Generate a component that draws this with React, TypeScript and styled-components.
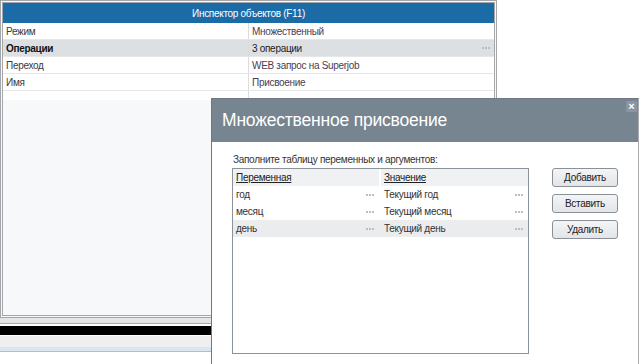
import * as React from 'react'
import styled, { createGlobalStyle } from 'styled-components'

const GlobalStyle = createGlobalStyle`
    html, body {
        margin: 0;
        padding: 0;
        background: #ffffff;
    }
    body {
        font-family: 'Liberation Sans', Arial, sans-serif;
        font-size: 10px;
        letter-spacing: -0.3px;
        color: #333333;
    }
`

const StyledPage = styled.div`
    position: relative;
    width: 640px;
    height: 364px;
    overflow: hidden;
    background: #ffffff;
`

const StyledInspector = styled.div`
    display: flex;
    flex-direction: column;
    width: 497px;
    height: 318px;
    box-sizing: border-box;
    border: 3px double #a3a7ab;
    background: #f6f8fa;
`

const StyledInspectorHeader = styled.div`
    height: 20px;
    display: flex;
    align-items: center;
    justify-content: center;
    background: #1b6ba6;
    color: #ffffff;
`

const StyledPropRow = styled.div<{ $active?: boolean }>`
    display: grid;
    grid-template-columns: 246px 1fr;
    height: 16px;
    border-bottom: 1px solid #e6e7e8;
    background: ${(p) => (p.$active ? '#dde0e3' : '#ffffff')};
`

const StyledPropName = styled.div<{ $active?: boolean }>`
    display: flex;
    align-items: center;
    padding-left: 3px;
    border-right: 1px solid #dcdcdc;
    color: ${(p) => (p.$active ? '#111111' : '#3a3a3a')};
    font-weight: ${(p) => (p.$active ? 700 : 400)};
`

const StyledPropValue = styled.div<{ $active?: boolean }>`
    display: flex;
    align-items: center;
    justify-content: space-between;
    padding: 0 4px 0 3px;
    color: ${(p) => (p.$active ? '#222222' : '#4a3d56')};
`

const StyledEmptyRow = styled.div`
    display: grid;
    grid-template-columns: 246px 1fr;
    height: 9px;
    background: #ffffff;
`

const StyledEmptyCell = styled.div`
    border-right: 1px solid #dcdcdc;
`

const StyledStrip = styled.div<{ $h: number; $bg: string; $line?: string }>`
    width: 497px;
    height: ${(p) => p.$h}px;
    background: ${(p) => p.$bg};
    border-bottom: ${(p) => (p.$line ? `1px solid ${p.$line}` : 'none')};
`

const StyledDots = styled.span`
    display: inline-flex;
    gap: 1px;
    & > i {
        display: block;
        width: 2px;
        height: 2px;
        background: #bcbec0;
    }
`

const StyledDialog = styled.div`
    position: absolute;
    left: 211px;
    top: 98px;
    width: 428px;
    height: 280px;
    box-sizing: border-box;
    border: 1px solid #6d7882;
    border-right-color: #a9adb1;
    background: #ffffff;
    display: flex;
    flex-direction: column;
`

const StyledDialogHeader = styled.div`
    height: 41px;
    display: flex;
    align-items: flex-start;
    padding: 2px 1px 0 10px;
    background: #778591;
`

const StyledDialogTitle = styled.div`
    margin-top: 9px;
    color: #ffffff;
    font-size: 17.5px;
    letter-spacing: -0.2px;
`

const StyledClose = styled.div`
    margin-left: auto;
    width: 11px;
    height: 11px;
    display: flex;
    align-items: center;
    justify-content: center;
    background: #8995a0;
    color: #ffffff;
    font-size: 11px;
    line-height: 11px;
    font-weight: 700;
    letter-spacing: 0;
`

const StyledDialogBody = styled.div`
    display: grid;
    grid-template-columns: 297px 66px;
    grid-template-rows: 14px auto;
    column-gap: 23px;
    padding: 12px 0 0 20px;
`

const StyledHint = styled.div`
    grid-column: 1 / 3;
    padding-left: 1px;
    color: #333333;
`

const StyledTable = styled.div`
    height: 186px;
    box-sizing: border-box;
    border: 1px solid #8b949d;
    background: #ffffff;
`

const StyledTableHead = styled.div`
    display: grid;
    grid-template-columns: 146px 1fr;
    column-gap: 2px;
    height: 17px;
`

const StyledHeadCell = styled.div`
    display: flex;
    align-items: center;
    padding-left: 3px;
    background: #f0f1f2;
    text-decoration: underline;
    color: #222222;
`

const StyledTableRow = styled.div<{ $active?: boolean }>`
    display: grid;
    grid-template-columns: 146px 1fr;
    column-gap: 2px;
    height: 17px;
    background: ${(p) => (p.$active ? '#ebecee' : '#ffffff')};
`

const StyledTableCell = styled.div`
    display: flex;
    align-items: center;
    justify-content: space-between;
    padding: 0 5px 0 3px;
    color: #333333;
`

const StyledButtons = styled.div`
    display: flex;
    flex-direction: column;
    gap: 7px;
`

const StyledButton = styled.button`
    height: 19px;
    padding: 0;
    box-sizing: border-box;
    border: 1px solid #8a9098;
    border-radius: 3px;
    background: linear-gradient(#f4f5f6, #e2e4e6);
    font-family: 'Liberation Sans', Arial, sans-serif;
    font-size: 10px;
    letter-spacing: -0.3px;
    color: #222222;
`

const Dots = () => (
    <StyledDots>
        <i />
        <i />
        <i />
    </StyledDots>
)

const PROPS = [
    { name: 'Режим', value: 'Множественный' },
    { name: 'Операции', value: '3 операции', active: true },
    { name: 'Переход', value: 'WEB запрос на Superjob' },
    { name: 'Имя', value: 'Присвоение' },
]

const VARS = [
    { name: 'год', value: 'Текущий год' },
    { name: 'месяц', value: 'Текущий месяц' },
    { name: 'день', value: 'Текущий день', active: true },
]

const App = () => {
    return (
        <>
            <GlobalStyle />
            <StyledPage>
                <StyledInspector>
                    <StyledInspectorHeader>Инспектор объектов (F11)</StyledInspectorHeader>
                    {PROPS.map((p) => (
                        <StyledPropRow key={p.name} $active={p.active}>
                            <StyledPropName $active={p.active}>{p.name}</StyledPropName>
                            <StyledPropValue $active={p.active}>
                                {p.value}
                                {p.active && <Dots />}
                            </StyledPropValue>
                        </StyledPropRow>
                    ))}
                    <StyledEmptyRow>
                        <StyledEmptyCell />
                    </StyledEmptyRow>
                </StyledInspector>
                <StyledStrip $h={5} $bg="#e4e5e6" $line="#a8acb0" />
                <StyledStrip $h={2} $bg="#ffffff" />
                <StyledStrip $h={9} $bg="#000000" />
                <StyledStrip $h={1} $bg="#ffffff" />
                <StyledStrip $h={11} $bg="#efefef" />
                <StyledStrip $h={4} $bg="#d9e5f1" $line="#b8bcc0" />

                <StyledDialog>
                    <StyledDialogHeader>
                        <StyledDialogTitle>Множественное присвоение</StyledDialogTitle>
                        <StyledClose>×</StyledClose>
                    </StyledDialogHeader>
                    <StyledDialogBody>
                        <StyledHint>Заполните таблицу переменных и аргументов:</StyledHint>
                        <StyledTable>
                            <StyledTableHead>
                                <StyledHeadCell>Переменная</StyledHeadCell>
                                <StyledHeadCell>Значение</StyledHeadCell>
                            </StyledTableHead>
                            {VARS.map((v) => (
                                <StyledTableRow key={v.name} $active={v.active}>
                                    <StyledTableCell>
                                        {v.name}
                                        <Dots />
                                    </StyledTableCell>
                                    <StyledTableCell>
                                        {v.value}
                                        <Dots />
                                    </StyledTableCell>
                                </StyledTableRow>
                            ))}
                        </StyledTable>
                        <StyledButtons>
                            <StyledButton>Добавить</StyledButton>
                            <StyledButton>Вставить</StyledButton>
                            <StyledButton>Удалить</StyledButton>
                        </StyledButtons>
                    </StyledDialogBody>
                </StyledDialog>
            </StyledPage>
        </>
    )
}

export default App
